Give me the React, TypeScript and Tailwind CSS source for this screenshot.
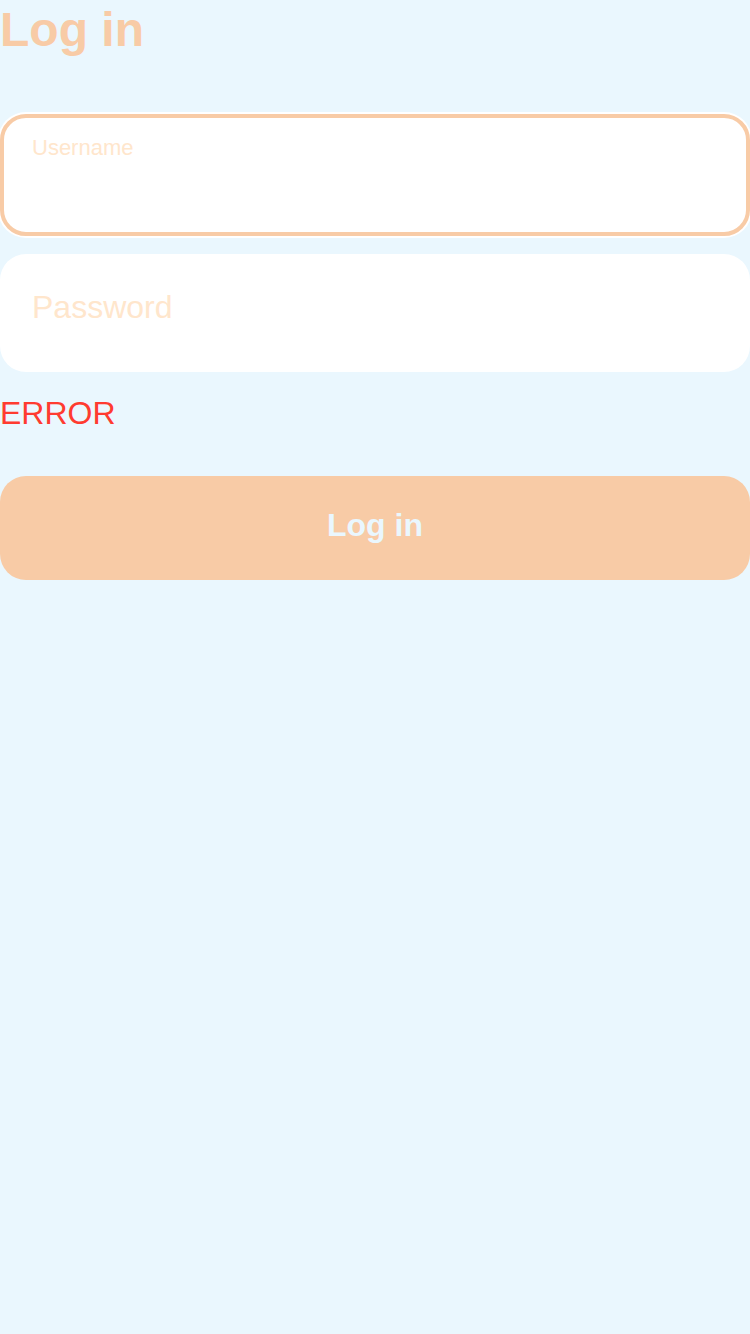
export default function App() {
  return (
    <div
      className="min-h-[1334px] w-[750px] bg-[#eaf7fe] flex flex-col"
      style={{ fontFamily: '"Liberation Sans", Arial, sans-serif' }}
    >
      <h1 className="mt-[2px] text-[48px] leading-[normal] font-bold text-[#f8cba6]">Log in</h1>

      <div className="mt-[57px] h-[122px] rounded-[26px] border-[4px] border-[#f8cba6] bg-white ring-2 ring-white relative">
        <span className="absolute left-[28px] top-[17px] text-[22px] leading-[normal] text-[#ffe6cc]">
          Username
        </span>
      </div>

      <div className="mt-[18px] h-[118px] rounded-[26px] bg-white px-8 pt-[35px]">
        <span className="text-[32px] leading-[normal] text-[#ffe6cc]">Password</span>
      </div>

      <p className="mt-[23px] text-[32px] leading-[normal] text-[#ff3b30]">ERROR</p>

      <button className="mt-[44px] h-[104px] w-full rounded-[26px] bg-[#f8cba6] flex items-center justify-center pb-[6px]">
        <span className="text-[32px] leading-[normal] font-bold text-[#eaf7fe]">Log in</span>
      </button>
    </div>
  );
}
